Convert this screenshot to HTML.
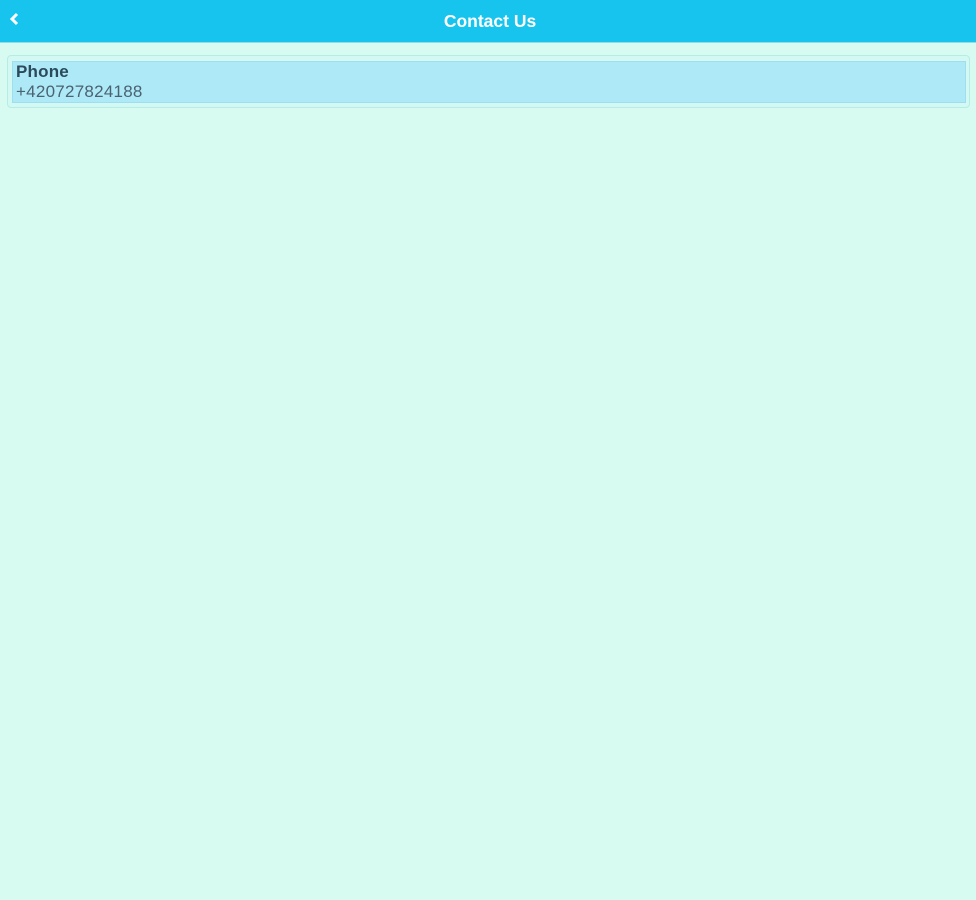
<!DOCTYPE html>
<html><head><meta charset="utf-8"><style>
html,body{margin:0;padding:0;width:976px;height:900px;background:#d8fbf1;font-family:"Liberation Sans",sans-serif;overflow:hidden}
.hdr{position:absolute;left:0;top:0;width:976px;height:42px;background:#16c4ee;border-bottom:1px solid #8fdcea}
.hdr .t{position:absolute;left:0;right:0;top:11px;text-align:center;color:#fff;font-weight:bold;font-size:17.5px;padding-left:4px}
.hdr svg{position:absolute;left:8px;top:12px}
.card{position:absolute;left:7px;top:55px;width:961px;height:51px;border:1px solid #b6ece8;border-radius:4px;background:#d4f8f2}
.in{position:absolute;left:4px;top:5px;width:952px;height:40px;background:#aee9f8;border:1px solid #9fdef0}
.l1{position:absolute;left:3px;top:0px;font-weight:bold;font-size:17px;letter-spacing:0.2px;color:#2b4a5a}
.l2{position:absolute;left:3px;top:20px;font-size:17px;letter-spacing:0.25px;color:#4b6270}
</style></head><body>
<div class="hdr"><svg width="12" height="14" viewBox="0 0 12 14"><path d="M9 2 L4 7 L9 12" stroke="#fff" stroke-width="3" fill="none"/></svg><div class="t">Contact Us</div></div>
<div class="card"><div class="in"><div class="l1">Phone</div><div class="l2">+420727824188</div></div></div>
</body></html>
